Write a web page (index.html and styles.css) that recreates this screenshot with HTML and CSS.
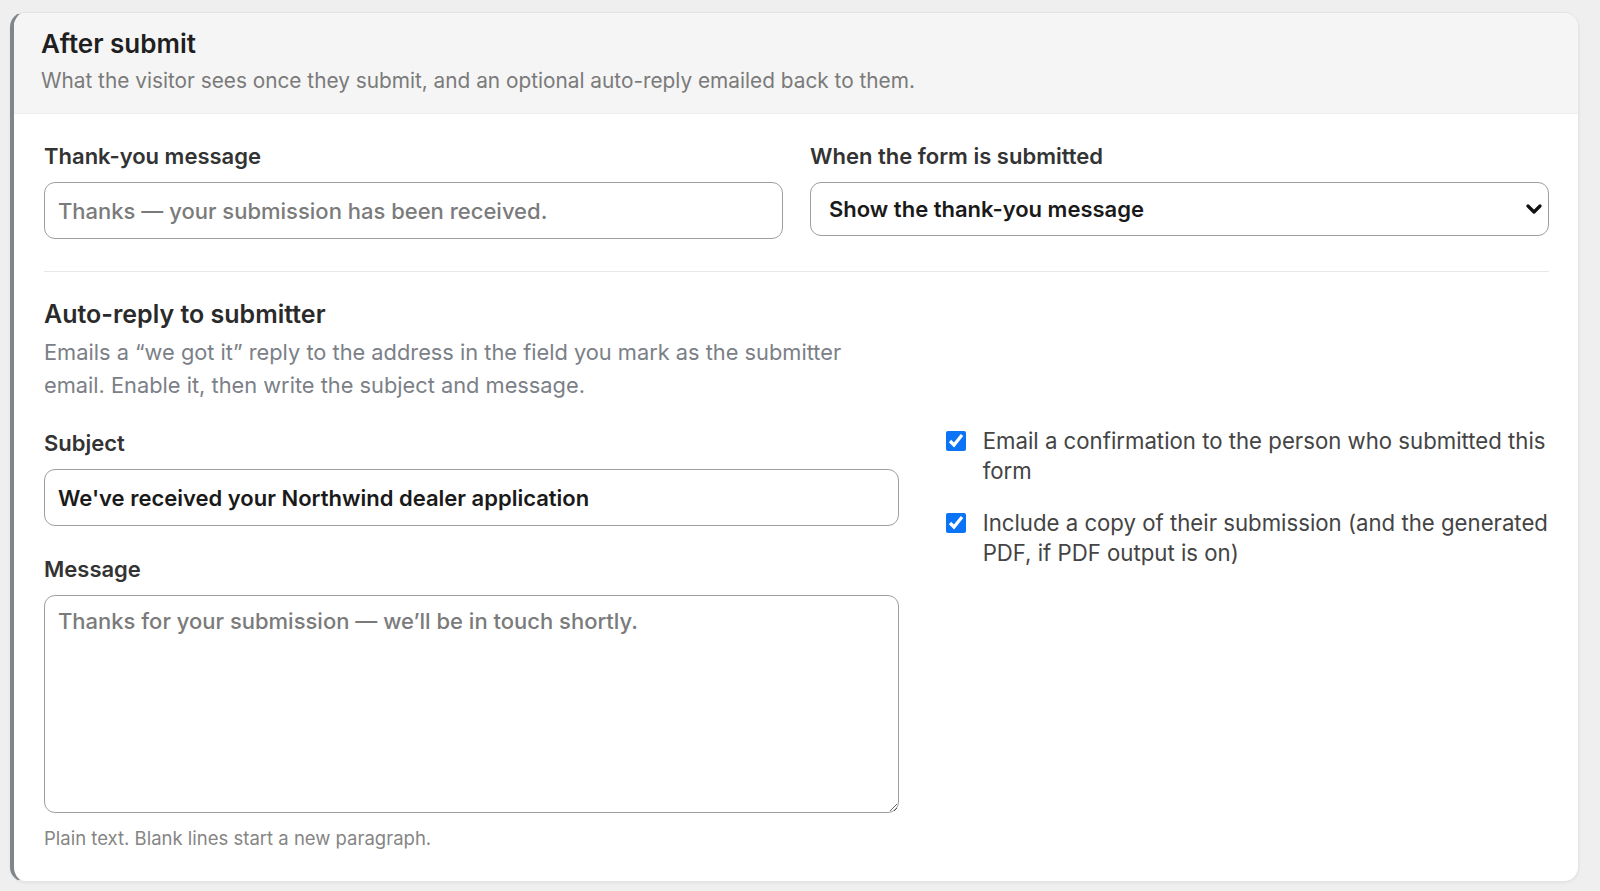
FILE: index.html
```html
<!DOCTYPE html>
<html lang="en">
<head>
  <meta charset="UTF-8">
  <meta name="viewport" content="width=device-width, initial-scale=1.0">
  <title>Form settings | After submit</title>
  <link rel="stylesheet" href="styles.css">
</head>
<body>
  <section class="panel">
    <header class="panel-head">
      <h2>After submit</h2>
      <p>What the visitor sees once they submit, and an optional auto-reply emailed back to them.</p>
    </header>

    <div class="panel-body">
      <div class="row-two">
        <div class="field">
          <label for="thanks">Thank-you message</label>
          <input id="thanks" type="text" placeholder="Thanks — your submission has been received.">
        </div>
        <div class="field">
          <label for="action">When the form is submitted</label>
          <select id="action">
            <option>Show the thank-you message</option>
            <option>Redirect to a page</option>
          </select>
        </div>
      </div>

      <hr class="divider">

      <h3>Auto-reply to submitter</h3>
      <p class="section-desc">Emails a “we got it” reply to the address in the field you mark as the submitter email. Enable it, then write the subject and message.</p>

      <div class="row-reply">
        <div class="reply-fields">
          <div class="field">
            <label for="subject">Subject</label>
            <input id="subject" type="text" value="We've received your Northwind dealer application">
          </div>
          <div class="field field-message">
            <label for="message">Message</label>
            <textarea id="message" placeholder="Thanks for your submission — we’ll be in touch shortly."></textarea>
            <p class="hint">Plain text. Blank lines start a new paragraph.</p>
          </div>
        </div>

        <div class="reply-options">
          <label class="check">
            <input type="checkbox" checked>
            <span>Email a confirmation to the person who submitted this form</span>
          </label>
          <label class="check">
            <input type="checkbox" checked>
            <span>Include a copy of their submission (and the generated PDF, if PDF output is on)</span>
          </label>
        </div>
      </div>
    </div>
  </section>
</body>
</html>
```

FILE: styles.css
```css
/* General Styles */
body {
  font-family: Inter, 'Noto Sans', sans-serif;
  background-color: #efefef;
  color: #222;
  margin: 0;
  padding: 12px 21px 8px 10px;
}

/* Panel */
.panel {
  background: white;
  border: 1px solid #e4e4e4;
  border-left: 4px solid #7f858a;
  border-radius: 15px;
  overflow: hidden;
  box-shadow: 0 1px 3px rgba(0, 0, 0, 0.06);
}

.panel-head {
  background: #f5f5f5;
  border-bottom: 1px solid #ececec;
  padding: 15px 27px 18px;
}

.panel-head h2 {
  margin: 0;
  font-size: 26px;
  line-height: 32px;
  font-weight: 600;
  color: #1f1f1f;
}

.panel-head p {
  margin: 7px 0 0;
  font-size: 20.8px;
  line-height: 28px;
  color: #7a7a7a;
}

.panel-body {
  padding: 28px 29px 31px 30px;
}

/* Fields */
.field label {
  display: block;
  font-size: 22px;
  line-height: 28px;
  font-weight: 600;
  color: #333;
  margin-bottom: 12px;
}

.field input,
.field select,
.field textarea {
  box-sizing: border-box;
  width: 100%;
  font-family: inherit;
  font-size: 22px;
  font-weight: 600;
  color: #1a1a1a;
  background: white;
  border: 1.5px solid #9e9e9e;
  border-radius: 11px;
  padding: 0 13px;
}

.field input {
  height: 57px;
}

.field select {
  height: 54px;
  padding: 0 30px 0 18px;
  appearance: none;
  background: white url("data:image/svg+xml,%3Csvg xmlns='http://www.w3.org/2000/svg' width='16' height='10' viewBox='0 0 16 10'%3E%3Cpath d='M2 2l6 6 6-6' fill='none' stroke='%23111' stroke-width='3.2' stroke-linecap='round' stroke-linejoin='round'/%3E%3C/svg%3E") no-repeat right 6px center;
}

.field textarea {
  height: 218px;
  padding: 12px 13px;
  resize: vertical;
  display: block;
}

.field input::placeholder,
.field textarea::placeholder {
  color: #7b7b7b;
  font-weight: 500;
}

.row-two {
  display: grid;
  grid-template-columns: 1fr 1fr;
  gap: 27px;
}

.divider {
  border: none;
  border-top: 1px solid #e8e8e8;
  margin: 32px 0 26px;
}

/* Auto-reply */
h3 {
  margin: 0;
  font-size: 25px;
  line-height: 32px;
  font-weight: 600;
  color: #2a2a2a;
}

.section-desc {
  max-width: 820px;
  margin: 6px 0 0;
  font-size: 21.8px;
  line-height: 33px;
  color: #7b8087;
}

.row-reply {
  display: grid;
  grid-template-columns: 17fr 12fr;
  gap: 47px;
  margin-top: 27px;
}

.field-message {
  margin-top: 29px;
}

.hint {
  margin: 14px 0 0;
  font-size: 18.5px;
  line-height: 23px;
  color: #858585;
}

.reply-options {
  display: flex;
  flex-direction: column;
  gap: 22px;
  margin-top: -3px;
}

.check {
  display: flex;
  align-items: flex-start;
  gap: 17px;
  font-size: 22.2px;
  line-height: 30px;
  color: #444;
  cursor: pointer;
}

.check input {
  width: 20px;
  height: 20px;
  margin: 5px 0 0;
  flex-shrink: 0;
  accent-color: #0b73f5;
}
```
